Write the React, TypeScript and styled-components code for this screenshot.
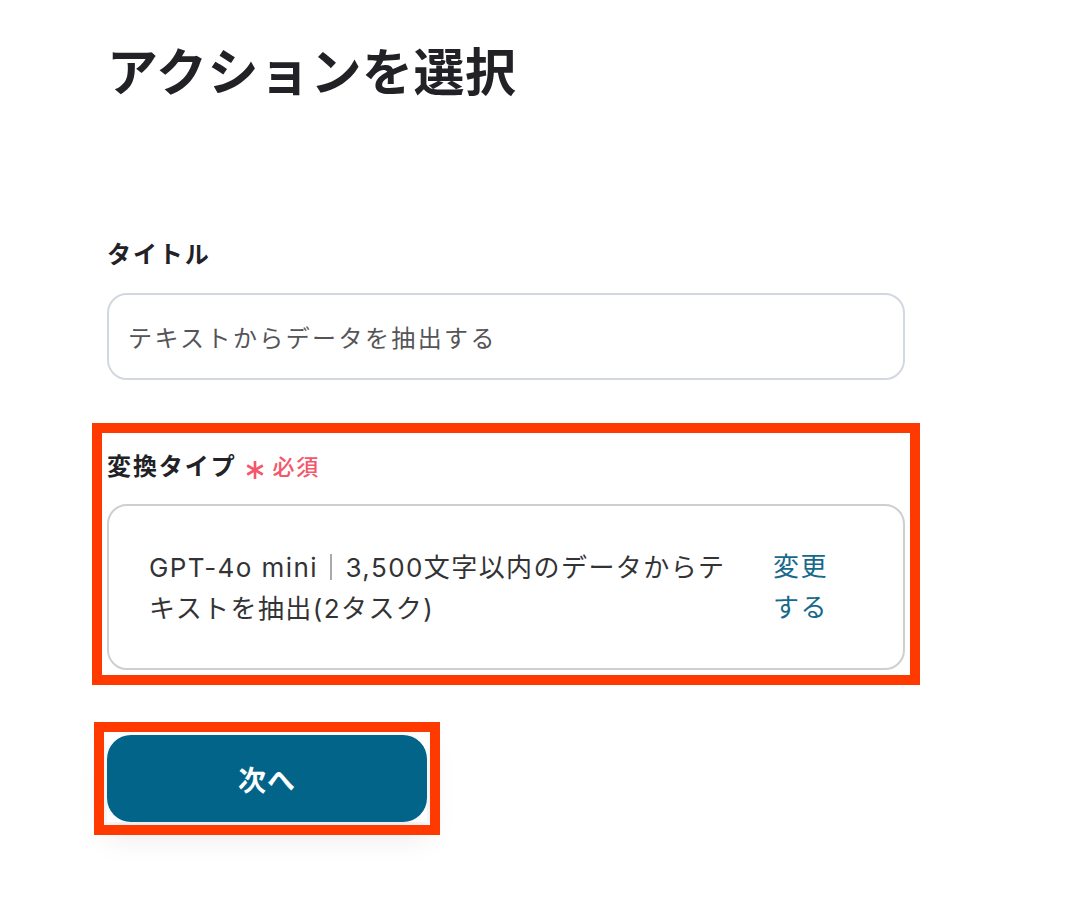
import React from "react";
import styled, { createGlobalStyle } from "styled-components";

const Global = createGlobalStyle`
  html, body { margin: 0; padding: 0; background: #ffffff; }
  body { font-family: Inter, "Noto Sans CJK JP", sans-serif; color: #222; }
`;

const Page = styled.div`
  width: 1080px;
  min-height: 920px;
  box-sizing: border-box;
  padding: 38px 0 0 107px;
  display: flex;
  flex-direction: column;
  align-items: flex-start;
`;

const Title = styled.h1`
  margin: 0;
  font-size: 51px;
  line-height: 70px;
  font-weight: 700;
  letter-spacing: 0.5px;
  color: #222226;
`;

const Field = styled.div<{ $top: number }>`
  width: 798px;
  margin-top: ${(p) => p.$top}px;
  display: flex;
  flex-direction: column;
  gap: 20px;
`;

const Highlight = styled(Field)`
  outline: 10px solid #ff3a00;
  outline-offset: 5px;
  padding-top: 11px;
  gap: 19px;
`;

const Label = styled.div`
  display: flex;
  align-items: center;
  font-size: 24px;
  line-height: 36px;
  font-weight: 700;
  letter-spacing: 0.08em;
  color: #222226;
`;

const Required = styled.span`
  margin-left: 8px;
  font-size: 22px;
  font-weight: 500;
  letter-spacing: 0.08em;
  color: #f4566a;
  display: inline-flex;
  align-items: center;
  gap: 8px;
`;

const Asterisk = styled.svg`
  width: 20px;
  height: 20px;
  transform: translateY(3px);
`;

const Input = styled.div`
  height: 87px;
  box-sizing: border-box;
  border: 2px solid #d3d7e0;
  border-radius: 20px;
  padding: 0 19px;
  display: flex;
  align-items: center;
  font-size: 24px;
  letter-spacing: 0.1em;
  color: #555558;
`;

const Card = styled.div`
  height: 166px;
  box-sizing: border-box;
  border: 2px solid #cfcfd2;
  border-radius: 20px;
  padding: 0 70px 0 40px;
  display: flex;
  align-items: center;
  gap: 24px;
`;

const CardText = styled.div`
  flex: 1;
  font-size: 26px;
  line-height: 41px;
  letter-spacing: 0.055em;
  color: #333336;
`;

const Bar = styled.span`
  display: inline-block;
  font-family: "Noto Sans CJK JP", sans-serif;
  font-weight: 400;
  color: #666;
  will-change: transform;
`;

const Link = styled.a`
  width: 60px;
  font-size: 26px;
  line-height: 41px;
  letter-spacing: 0.055em;
  color: #16698c;
  text-decoration: none;
  cursor: pointer;
`;

const ButtonFrame = styled.div`
  margin-top: 65px;
  display: flex;
  outline: 10px solid #ff3a00;
  outline-offset: 3px;
  box-shadow: 0 14px 30px rgba(40, 40, 70, 0.1);
`;

const Button = styled.button`
  width: 320px;
  height: 87px;
  border: none;
  border-radius: 24px;
  background: #036489;
  color: #ffffff;
  font-family: Inter, "Noto Sans CJK JP", sans-serif;
  font-size: 28px;
  font-weight: 700;
  letter-spacing: 0.04em;
  cursor: pointer;
`;

export default function App() {
  return (
    <>
      <Global />
      <Page>
        <Title>アクションを選択</Title>
        <Field $top={129}>
          <Label>タイトル</Label>
          <Input>テキストからデータを抽出する</Input>
        </Field>
        <Highlight $top={58}>
          <Label>
            変換タイプ
            <Required>
              <Asterisk viewBox="0 0 20 20">
                <g stroke="#f4566a" strokeWidth="2.6" strokeLinecap="butt">
                  <line x1="10" y1="1" x2="10" y2="19" />
                  <line x1="2.2" y1="5.5" x2="17.8" y2="14.5" />
                  <line x1="2.2" y1="14.5" x2="17.8" y2="5.5" />
                </g>
              </Asterisk>
              必須
            </Required>
          </Label>
          <Card>
            <CardText>
              GPT-4o mini<Bar>｜</Bar>3,500文字以内のデータからテキストを抽出(2タスク)
            </CardText>
            <Link>変更する</Link>
          </Card>
        </Highlight>
        <ButtonFrame>
          <Button>次へ</Button>
        </ButtonFrame>
      </Page>
    </>
  );
}
